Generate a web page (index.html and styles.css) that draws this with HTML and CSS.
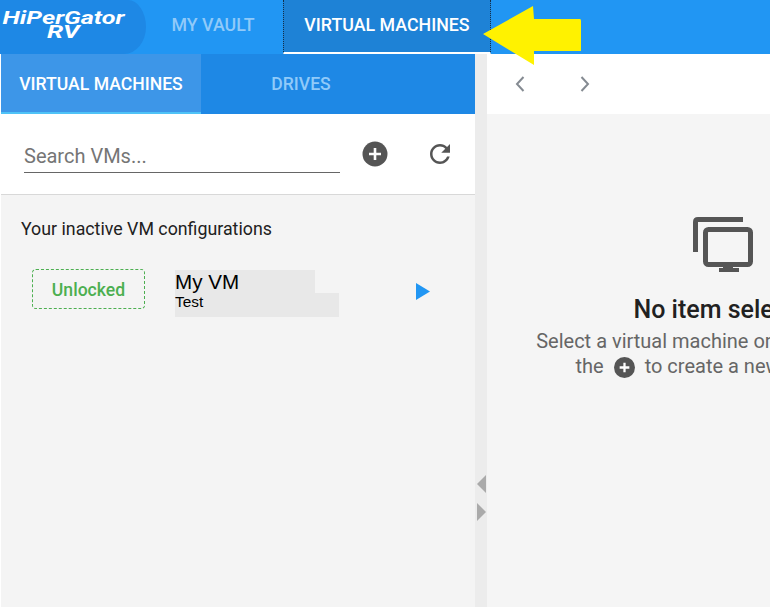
FILE: index.html
```html
<!DOCTYPE html>
<html lang="en">
<head>
<meta charset="utf-8">
<title>HiPerGator RV</title>
<link rel="stylesheet" href="styles.css">
</head>
<body>
<div class="app">
  <header class="topbar">
    <div class="logo"><span class="logo-top">HiPerGator</span><span class="logo-bottom">RV</span></div>
    <div class="nav-tab vault">MY VAULT</div>
    <div class="nav-tab active">VIRTUAL MACHINES</div>
  </header>
  <svg class="callout" width="100" height="62" viewBox="0 0 100 62"><path d="M1 28 L51 0 L52 13 L98 13 Q99 13 99 15 L99 45 L52 45 L52 59 Z" fill="#fff200"/></svg>
  <div class="main">
    <section class="left">
      <div class="subtabs">
        <div class="subtab current">VIRTUAL MACHINES</div>
        <div class="subtab drives">DRIVES</div>
      </div>
      <div class="searchbar">
        <div class="search">Search VMs...</div>
        <svg class="add" width="26" height="26" viewBox="0 0 26 26"><circle cx="13" cy="13" r="12.5" fill="#555"/><path d="M13 7v12M7 13h12" stroke="#fff" stroke-width="2.6"/></svg>
        <svg class="refresh" width="30" height="30" viewBox="0 0 24 24"><path fill="#555" d="M17.65 6.35C16.2 4.9 14.21 4 12 4c-4.42 0-7.99 3.58-7.99 8s3.57 8 7.99 8c3.73 0 6.84-2.55 7.73-6h-2.08c-.82 2.33-3.04 4-5.65 4-3.31 0-6-2.69-6-6s2.69-6 6-6c1.66 0 3.14.69 4.22 1.78L13 11h7V4l-2.35 2.35z"/></svg>
      </div>
      <div class="list">
        <h2 class="list-title">Your inactive VM configurations</h2>
        <div class="vm">
          <div class="status">Unlocked</div>
          <div class="vm-info">
            <div class="vm-name">My VM</div>
            <div class="vm-desc">Test</div>
          </div>
          <svg class="play" width="14" height="17" viewBox="0 0 14 17"><path d="M0 0L14 8.5L0 17Z" fill="#2196f3"/></svg>
        </div>
      </div>
    </section>
    <div class="divider">
      <svg width="9" height="18" viewBox="0 0 9 18"><path d="M9 0V18L0 9Z" fill="#aaa"/></svg>
      <svg width="9" height="18" viewBox="0 0 9 18"><path d="M0 0V18L9 9Z" fill="#aaa"/></svg>
    </div>
    <section class="right">
      <div class="pager">
        <svg width="10" height="16" viewBox="0 0 10 16"><path d="M8.5 1L2 8L8.5 15" fill="none" stroke="#858b92" stroke-width="2"/></svg>
        <svg width="10" height="16" viewBox="0 0 10 16"><path d="M1.5 1L8 8L1.5 15" fill="none" stroke="#858b92" stroke-width="2"/></svg>
      </div>
      <div class="empty">
        <svg class="monitors" width="60" height="55" viewBox="0 0 60 55"><path d="M2.5 35V5Q2.5 2.5 5 2.5H50" fill="none" stroke="#555" stroke-width="5"/><rect x="12.5" y="12.5" width="45" height="35" rx="3" fill="none" stroke="#555" stroke-width="5"/><path d="M30 48h10v3h6v4H26v-4h4z" fill="#555"/></svg>
        <h1 class="empty-title">No item selected</h1>
        <p class="empty-text">Select a virtual machine or drive from the list<br>the <svg class="inline-add" width="21" height="21" viewBox="0 0 26 26"><circle cx="13" cy="13" r="13" fill="#555"/><path d="M13 7v12M7 13h12" stroke="#fff" stroke-width="2.8"/></svg> to create a new VM or disk</p>
      </div>
    </section>
  </div>
</div>
</body>
</html>
```
FILE: styles.css
```css
* { box-sizing: border-box; }
html, body { margin: 0; height: 100%; overflow: hidden; background: #fff; }
body { font-family: Roboto, "Liberation Sans", sans-serif; }
.app { position: relative; width: 770px; height: 607px; overflow: hidden; }

.topbar { display: flex; height: 54px; background: #2196f3; }
.logo {
  width: 146px; display: flex; flex-direction: column; align-items: center;
  padding: 9px 19px 0 0; background: #1e88e5;
  border-radius: 0 18px 22px 0 / 0 50% 50% 0;
  color: #fff; font-family: Roboto, sans-serif; font-style: italic; font-weight: 700; line-height: 1;
}
.logo-top { font-size: 18px; height: 14px; white-space: nowrap; transform: scaleX(1.4); }
.logo-bottom { font-size: 18px; transform: scaleX(1.45); }
.nav-tab {
  display: flex; align-items: center; justify-content: center;
  font-size: 17.8px; font-weight: 500;
}
.vault { width: 137px; padding: 0 3px 6px 0; color: #90caf9; }
.active {
  width: 208px; padding-bottom: 4px; color: #fff; background: #1e82d6;
  border-left: 1px dotted #12304a; border-right: 1px dotted #12304a;
  border-bottom: 2px solid #fff;
}
.callout { position: absolute; left: 482px; top: 6px; z-index: 2; }

.main { display: flex; height: 553px; padding-left: 1px; }
.left { width: 474px; flex: none; display: flex; flex-direction: column; }
.subtabs { display: flex; height: 60px; background: #1e88e5; }
.subtab { display: flex; align-items: center; justify-content: center; width: 200px; font-size: 17.6px; font-weight: 500; }
.current { padding-top: 1px; background: #3d96e8; color: #fff; border-bottom: 2px solid #4fc3f7; }
.drives { color: #90caf9; }
.searchbar { display: flex; align-items: flex-start; height: 81px; padding: 27px 0 0 23px; border-bottom: 1px solid #d8d8d8; background: #fff; }
.search { width: 316px; height: 32px; padding-top: 4px; font-size: 20px; line-height: 22px; color: #757575; border-bottom: 1px solid #666; }
.add { margin: 0 0 0 22px; }
.refresh { margin: -2px 0 0 37px; }
.list { flex: 1; background: #f4f4f4; padding: 24px 0 0 20px; }
.list-title { margin: 0; font-size: 17.8px; line-height: 20px; font-weight: 400; color: #212121; }
.vm { display: flex; align-items: flex-start; margin: 30px 0 0 11px; }
.status {
  width: 113px; height: 40px; padding-top: 2px; display: flex; align-items: center; justify-content: center;
  border: 1px dashed #4caf50; border-radius: 4px;
  color: #4caf50; font-size: 17.6px; font-weight: 500;
}
.vm-info { width: 164px; margin: 1px 0 0 30px; font-family: "Liberation Sans", sans-serif; color: #000; }
.vm-name { width: 140px; height: 23px; background: #e8e8e8; font-size: 20.6px; line-height: 24px; }
.vm-desc { height: 24px; background: #e8e8e8; font-size: 15.4px; line-height: 18px; }
.play { margin: 14px 0 0 77px; }

.divider { width: 12px; flex: none; background: #ececec; display: flex; flex-direction: column; align-items: flex-end; gap: 10px; padding: 421px 1px 0 0; }

.right { width: 482px; flex: none; display: flex; flex-direction: column; background: #f5f5f5; }
.pager { display: flex; align-items: center; gap: 55px; height: 60px; padding-left: 28px; background: #fff; }
.empty { display: flex; flex-direction: column; align-items: center; padding: 103px 0 0 0; }
.monitors { margin-left: -10px; }
.empty-title { margin: 24px 0 0; font-size: 25px; line-height: 28px; font-weight: 500; color: #212121; white-space: nowrap; }
.empty-text { margin: 5px 0 0; font-size: 20px; line-height: 25px; text-align: center; text-indent: 12px; color: #666; white-space: nowrap; }
.inline-add { vertical-align: -5px; margin: 0 5px; }
```
